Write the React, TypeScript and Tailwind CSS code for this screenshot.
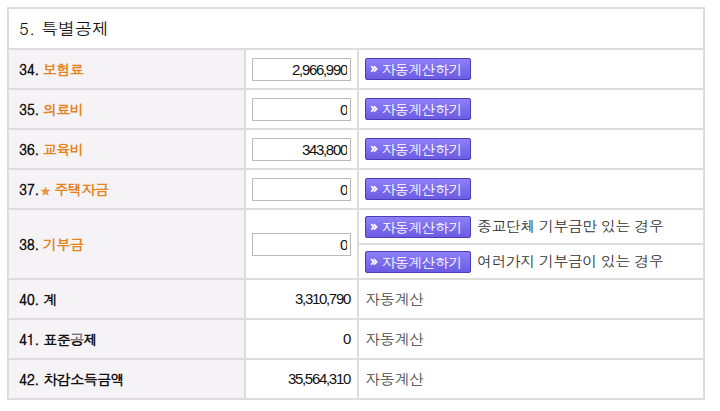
import React from "react"

const KR = "font-['Dotum','Noto_Sans_CJK_KR',sans-serif]"

function CalcButton() {
  return (
    <button
      type="button"
      className="inline-flex h-[22px] w-[106px] items-center rounded-[2px] border border-[#4a3db5] bg-gradient-to-b from-[#8e80f7] to-[#6c5be3] pl-[4px] text-[14px] leading-none text-white tracking-[-0.6px]"
    >
      <span className="mr-[4px] text-[16px] font-bold leading-none">»</span>
      자동계산하기
    </button>
  )
}

function AmountInput({ value }: { value: string }) {
  return (
    <input
      type="text"
      readOnly
      value={value}
      className="h-[23px] w-[99px] border border-[#b9b9b9] bg-white pr-[3px] text-right text-[15px] tracking-[-1.3px] text-[#111] font-['Liberation_Sans',sans-serif] outline-none"
    />
  )
}

function Label({ no, name, star }: { no: string; name: string; star?: boolean }) {
  return (
    <span className="text-[14px] font-bold tracking-[-0.5px]">
      <span className="text-[#111]">{no}.</span>
      {star && <span className="ml-[1px] text-[11px] text-[#e8923a]">★</span>}
      <span className="ml-[4px] text-[#e58219]">{name}</span>
    </span>
  )
}

const inputRows = [
  { no: "34", name: "보험료", value: "2,966,990" },
  { no: "35", name: "의료비", value: "0" },
  { no: "36", name: "교육비", value: "343,800" },
  { no: "37", name: "주택자금", value: "0", star: true },
]

const totalRows = [
  { label: "40. 계", value: "3,310,790" },
  { label: "41. 표준공제", value: "0" },
  { label: "42. 차감소득금액", value: "35,564,310" },
]

const labelCell = "h-[40px] bg-[#f6f3f6] pl-[10px] border-2 border-[#dddddd]"
const cell = "h-[40px] bg-white border-2 border-[#dddddd]"

export default function App() {
  return (
    <div className={`h-[411px] w-[720px] bg-white pl-[7px] pt-[7px] ${KR}`}>
      <table className="w-[698px] border-collapse">
        <tbody>
          <tr>
            <td colSpan={3} className="h-[41px] border-2 border-[#dddddd] bg-white pl-[10px] text-[17px] text-[#111]">
              5. 특별공제
            </td>
          </tr>
          {inputRows.map(r => (
            <tr key={r.no}>
              <td className={`${labelCell} w-[237px]`}>
                <Label no={r.no} name={r.name} star={r.star} />
              </td>
              <td className={`${cell} w-[113px] pl-[6px]`}>
                <AmountInput value={r.value} />
              </td>
              <td className={`${cell} pl-[6px]`}>
                <CalcButton />
              </td>
            </tr>
          ))}
          <tr>
            <td rowSpan={2} className={labelCell}>
              <Label no="38" name="기부금" />
            </td>
            <td rowSpan={2} className={`${cell} pl-[6px]`}>
              <AmountInput value="0" />
            </td>
            <td className="h-[35px] border-2 border-[#dddddd] bg-white pl-[6px]">
              <div className="flex items-center gap-[6px]">
                <CalcButton />
                <span className="text-[15px] tracking-[-0.6px] text-[#333]">종교단체 기부금만 있는 경우</span>
              </div>
            </td>
          </tr>
          <tr>
            <td className="h-[35px] border-2 border-[#dddddd] bg-white pl-[6px]">
              <div className="flex items-center gap-[6px]">
                <CalcButton />
                <span className="text-[15px] tracking-[-0.6px] text-[#333]">여러가지 기부금이 있는 경우</span>
              </div>
            </td>
          </tr>
          {totalRows.map(r => (
            <tr key={r.label}>
              <td className={labelCell}>
                <span className="text-[14px] font-bold tracking-[-0.5px] text-[#111]">{r.label}</span>
              </td>
              <td className={`${cell} pr-[7px] text-right text-[15px] tracking-[-1.3px] text-[#111] font-['Liberation_Sans',sans-serif]`}>
                {r.value}
              </td>
              <td className={`${cell} pl-[6px] text-[15px] tracking-[-0.3px] text-[#444]`}>자동계산</td>
            </tr>
          ))}
        </tbody>
      </table>
    </div>
  )
}
